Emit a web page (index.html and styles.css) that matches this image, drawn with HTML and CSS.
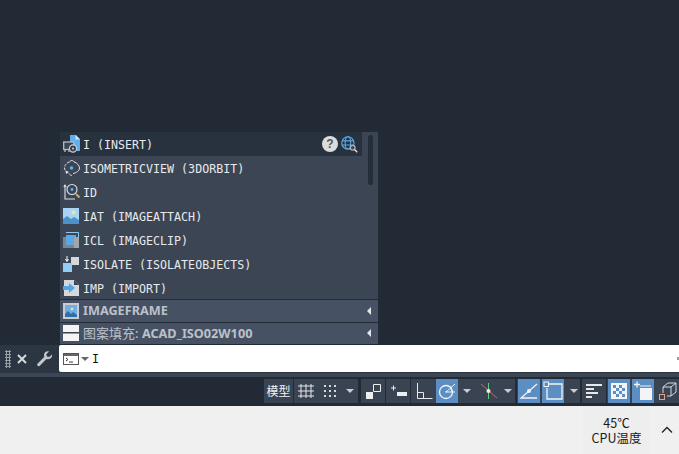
FILE: index.html
```html
<!DOCTYPE html>
<html lang="zh">
<head>
<meta charset="utf-8">
<title>AutoCAD</title>
<link rel="stylesheet" href="styles.css">
</head>
<body>
<div class="app">
  <main class="canvas">
    <div class="popup">
      <div class="upper">
        <div class="list">
          <div class="row row-active">
            <svg class="ric ric-lg" viewBox="0 0 18 18"><path d="M7 0h6l4 4v12H7z" fill="#5fb0ee"/><path d="M12.500 0L17 4.500h-4.500z" fill="#cfe6f8"/><rect x=".7" y="7" width="10" height="7.500" fill="#3a4453" stroke="#b8bcc2" stroke-width="1.300"/><circle cx="10" cy="13.500" r="3.600" fill="#39424f" stroke="#c8ccd1" stroke-width="1.200"/><path d="M2 14.500v2.500M6 14.500v2.500" stroke="#b8bcc2" stroke-width="1.300"/><circle cx="10" cy="13.500" r="1" fill="#d2d5d9"/></svg>
            <span class="cmd">I (INSERT)</span>
            <span class="row-tools">
              <span class="help">?</span>
              <svg class="globe" viewBox="0 0 16 16"><circle cx="6.500" cy="6.500" r="5.800" fill="none" stroke="#5aa9e6" stroke-width="1.100"/><ellipse cx="6.500" cy="6.500" rx="2.600" ry="5.800" fill="none" stroke="#5aa9e6"/><path d="M.8 4.600h11.400M.8 8.400h11.400" stroke="#5aa9e6"/><circle cx="11" cy="11" r="2.200" fill="#39424f" stroke="#aeb2b8" stroke-width="1.200"/><path d="M12.700 12.700l2.600 2.600" stroke="#e8e8e8" stroke-width="1.200"/></svg>
            </span>
          </div>
          <div class="row">
            <svg class="ric ric-lg" viewBox="0 0 18 18"><g fill="none" stroke="#dfe2e5"><path d="M6 3C3.500 4 1.500 6.500 1.500 9c0 2 1.500 3.500 3.500 4.500" stroke-dasharray="2.500 1.200"/><path d="M11.500 3c2.500 1 5 3.500 5 6 0 3-3.500 5-6.500 5.500"/><path d="M6 3.500C6.800 2 8 1.500 9 1.500c1 0 2 .8 2.800 2.200M6 14.500c.8 1.300 2 2 3 2"/></g><path d="M2.500 11.500l3.500 1.500-3 2z" fill="#dfe2e5"/><circle cx="8.500" cy="9" r="1.800" fill="#5fb0ee"/></svg>
            <span class="cmd">ISOMETRICVIEW (3DORBIT)</span>
          </div>
          <div class="row">
            <svg class="ric ric-lg" viewBox="0 0 18 18"><g fill="none" stroke="#dfe2e5" stroke-width="1.100"><path d="M2 3v13h10"/><circle cx="9" cy="6.500" r="5"/></g><path d="M.3 4L2 1l1.700 3z" fill="#dfe2e5"/><circle cx="9" cy="6.500" r="1.400" fill="#5fb0ee"/><path d="M13 11l3.500 3.500" stroke="#d9a860" stroke-width="2"/></svg>
            <span class="cmd">ID</span>
          </div>
          <div class="row">
            <svg class="ric" viewBox="0 0 16 16"><rect width="16" height="16" fill="#a8d5f5"/><path d="M0 16v-5l4-3 4 3 3-2 5 3v4z" fill="#4c91c8"/><circle cx="10.500" cy="4.500" r="2" fill="#f3e39b"/></svg>
            <span class="cmd">IAT (IMAGEATTACH)</span>
          </div>
          <div class="row">
            <svg class="ric" viewBox="0 0 16 16"><rect x="0" y="5" width="11" height="11" fill="#7f858d"/><rect x="3" y="3" width="10" height="10" fill="#5aa9e6"/><path d="M3 .5h12.500V13" fill="none" stroke="#8fc8f2"/><rect x="11" y="5" width="5" height="11" fill="#a2a6ab"/></svg>
            <span class="cmd">ICL (IMAGECLIP)</span>
          </div>
          <div class="row">
            <svg class="ric" viewBox="0 0 16 16"><rect x="8" y="1" width="8" height="8" fill="#d5d7da"/><rect x="0" y="7" width="9" height="9" fill="#93cdf6"/><path d="M4 0v5M2.500 3L4 5.500 5.500 3" fill="none" stroke="#fff"/></svg>
            <span class="cmd">ISOLATE (ISOLATEOBJECTS)</span>
          </div>
          <div class="row">
            <svg class="ric" viewBox="0 0 16 16"><path d="M1 0h10l5 5v11H1z" fill="#d5d7da"/><path d="M11 0l5 5h-5z" fill="#39424f"/><path d="M0 6h6V3l6 5-6 5v-3H0z" fill="#4fa6e8"/></svg>
            <span class="cmd">IMP (IMPORT)</span>
          </div>
        </div>
        <div class="scroll"><span class="thumb"></span></div>
      </div>
      <div class="row row-sys">
        <svg class="ric" viewBox="0 0 16 16"><rect width="16" height="16" fill="#c9ccd0"/><rect x="2" y="2" width="12" height="12" fill="#6fb0e4"/><path d="M2 14v-3l3-3 3 3 2-2 4 3v2z" fill="#2e6fa6"/><circle cx="9" cy="6" r="1.300" fill="#f3e39b"/></svg>
        <span class="sys">IMAGEFRAME</span>
        <span class="caret-left"></span>
      </div>
      <div class="row row-sys">
        <svg class="ric" viewBox="0 0 16 16"><rect width="16" height="16" fill="#f4f4f4"/><rect y="7" width="16" height="1.500" fill="#39424f"/></svg>
        <span class="sys"><span class="sys-cjk">图案填充:</span> ACAD_ISO02W100</span>
        <span class="caret-left"></span>
      </div>
    </div>
  </main>

  <section class="cmdbar">
    <span class="grip"></span>
    <svg class="cb-ic" viewBox="0 0 12 12"><path d="M2 2l8 8M10 2l-8 8" stroke="#d6d9dd" stroke-width="2"/></svg>
    <svg class="cb-wrench" viewBox="0 0 16 16"><path d="M15 3.500l-2.800 2.600-2.300-.6-.6-2.300L12 .5C9.500-.2 7 1.500 7 4c0 .7.100 1.200.4 1.700L.8 12.600c-.8.800-.8 1.500-.2 2.200.700.700 1.500.600 2.200-.1l6.600-6.800c2.900 1 6.400-1.300 5.600-4.400z" fill="#c4c7cb"/></svg>
    <div class="cmdinput">
      <svg class="prompt" viewBox="0 0 16 12"><rect x=".5" y=".5" width="15" height="11" fill="#fff" stroke="#555"/><rect x="1" y="1" width="14" height="2" fill="#666"/><path d="M3 5l2 1.500L3 8M6 9h4" fill="none" stroke="#333"/></svg>
      <span class="prompt-caret"></span>
      <span class="typed">I</span>
      <span class="input-end"></span>
    </div>
  </section>
  <div class="band"></div>

  <footer class="statusbar">
    <div class="sgroup g-model"><span class="model">模型</span></div>
    <div class="sgroup g-grid">
      <svg class="sb" viewBox="0 0 20 20"><path d="M5 3v14M10 3v14M15 3v14M2 5h16M2 10h16M2 15h16" stroke="#e6e8ea" fill="none"/></svg>
      <svg class="sb" viewBox="0 0 20 20"><g fill="#d6d9dc"><rect x="4" y="4" width="2" height="2"/><rect x="9" y="4" width="2" height="2"/><rect x="14" y="4" width="2" height="2"/><rect x="4" y="9" width="2" height="2"/><rect x="9" y="9" width="2" height="2"/><rect x="14" y="9" width="2" height="2"/><rect x="4" y="14" width="2" height="2"/><rect x="9" y="14" width="2" height="2"/><rect x="14" y="14" width="2" height="2"/></g></svg>
      <span class="drop"></span>
    </div>
    <div class="sgroup g-one">
      <svg class="sb" viewBox="0 0 20 20"><rect x="3" y="11" width="7" height="7" fill="#eceef0"/><path d="M10.500 10.500V3.500h7v7h-7" fill="none" stroke="#eceef0"/></svg>
    </div>
    <div class="sgroup g-one">
      <svg class="sb" viewBox="0 0 20 20"><path d="M3 7h5M5.500 4.500v5" stroke="#eceef0" fill="none"/><rect x="9" y="11" width="10" height="4" fill="#eceef0"/></svg>
    </div>
    <div class="sgroup g-polar">
      <svg class="sb" viewBox="0 0 20 20"><path d="M3.500 2v15.500h15M3.500 11.500h6v6" fill="none" stroke="#e6e8ea"/></svg>
      <svg class="sb on" viewBox="0 0 22 24"><circle cx="10" cy="13" r="6.500" fill="none" stroke="#f2f4f6" stroke-width="1.300"/><path d="M10 13l9-8M9 13h10M14 7l2 6" fill="none" stroke="#f2f4f6"/></svg>
      <span class="drop"></span>
      <svg class="sb" viewBox="0 0 20 20"><path d="M9.500 2v16" stroke="#5fd07f"/><path d="M2 3l16 14" stroke="#e0605a"/><circle cx="9.500" cy="10" r="2" fill="#eceef0"/></svg>
      <span class="drop"></span>
    </div>
    <div class="sgroup g-otrack">
      <svg class="sb on" viewBox="0 0 22 24"><path d="M19 5L3 19h16" fill="none" stroke="#f2f4f6" stroke-width="1.300"/><circle cx="11" cy="12" r="2" fill="#f2f4f6"/></svg>
      <svg class="sb on" viewBox="0 0 22 24"><path d="M7 5h13v15H5V9" fill="none" stroke="#f2f4f6" stroke-width="1.300"/><rect x="2" y="3" width="4.500" height="4.500" fill="none" stroke="#f2f4f6"/></svg>
      <span class="drop"></span>
    </div>
    <div class="sgroup g-one">
      <svg class="sb" viewBox="0 0 20 20"><path d="M2 4h16M2 8h8M2 12h12M2 16h6" stroke="#e6e8ea" stroke-width="2" fill="none"/></svg>
    </div>
    <div class="sgroup g-last">
      <svg class="sb on" viewBox="0 0 22 24"><rect x="3" y="4" width="16" height="16" fill="#f2f4f6"/><path d="M5 6h3v3H5zM11 6h3v3h-3zM8 9h3v3H8zM14 9h3v3h-3zM5 12h3v3H5zM11 12h3v3h-3zM8 15h3v3H8zM14 15h3v3h-3z" fill="#5b8fc3"/></svg>
      <svg class="sb on" viewBox="0 0 22 24"><rect x="8" y="9" width="12" height="12" fill="#f2f4f6"/><path d="M5 2.500v6M2 5.500h6" stroke="#f2f4f6" fill="none" stroke-width="1.300"/><path d="M8 7h11" stroke="#f2f4f6" fill="none"/></svg>
      <svg class="sb iso" viewBox="0 0 20 20"><path d="M5 12V6l5-4h8v9l-5 4H9" fill="none" stroke="#d6d9dc"/><path d="M5 6h8v9M13 6l5-4" fill="none" stroke="#d6d9dc"/><rect x="1.500" y="13.500" width="5" height="5" fill="none" stroke="#e6a27a"/></svg>
    </div>
  </footer>

  <div class="taskbar">
    <div class="tray-item">
      <span class="tray-line">45℃</span>
      <span class="tray-line">CPU温度</span>
    </div>
    <svg class="chev" viewBox="0 0 12 8"><path d="M1 6.500l5-5 5 5" fill="none" stroke="#222" stroke-width="1.300"/></svg>
  </div>
</div>
</body>
</html>
```
FILE: styles.css
```css
* { box-sizing: border-box; }
html, body { margin: 0; padding: 0; }
body { width: 679px; height: 454px; overflow: hidden; font-family: "Noto Sans", "Noto Sans CJK SC", sans-serif; }

.app { display: flex; flex-direction: column; width: 679px; height: 454px; }

.canvas { position: relative; flex: 0 0 345px; background: #212a35; }

.popup { position: absolute; left: 60px; top: 132px; width: 318px; height: 212px; display: flex; flex-direction: column; background: #3b4554; }
.upper { display: flex; flex: none; height: 167px; overflow: hidden; }
.list { flex: 1; display: flex; flex-direction: column; }
.row { display: flex; align-items: center; height: 24px; flex: none; padding-left: 3px; color: #e8eaec; }
.row-active { background: #28313e; }
.row-sys { flex: 1; height: auto; background: #475164; border-top: 1px solid #232b36; color: #bcc1c9; }
.ric { width: 16px; height: 16px; flex: none; margin-right: 4px; }
.ric-lg { width: 18px; height: 18px; margin-right: 2px; }
.cmd { font: 11.65px/1 "DejaVu Sans Mono", monospace; white-space: pre; padding-top: 4px; }
.sys { font: 700 12.7px/1 "Noto Sans", "Noto Sans CJK SC", sans-serif; white-space: pre; }
.sys-cjk { font-family: "Noto Sans CJK SC", sans-serif; font-weight: 400; font-size: 13px; }
.row-tools { margin-left: auto; display: flex; align-items: center; gap: 3px; padding-right: 4px; }
.help { width: 16px; height: 16px; border-radius: 50%; background: #dcdcdc; color: #555; font: 700 12px/16px "Liberation Sans", sans-serif; text-align: center; }
.globe { width: 17px; height: 17px; }
.caret-left { margin-left: auto; margin-right: 7px; width: 0; height: 0; border: 4px solid transparent; border-right-color: #e4e6e9; border-left-width: 0; }

.scroll { width: 16px; flex: none; display: flex; justify-content: center; align-items: flex-start; padding-top: 3px; background: #3b4554; }
.thumb { width: 5px; height: 50px; border-radius: 3px; background: #252d39; }

.cmdbar { flex: 0 0 28px; display: flex; align-items: flex-start; background: #2c3542; }
.grip { width: 6px; height: 18px; margin: 5px 0 0 5px; background-image: radial-gradient(#9aa0a7 1px, transparent 1.200px); background-size: 3px 3px; }
.cb-ic { width: 12px; height: 12px; margin: 8px 0 0 5px; }
.cb-wrench { width: 16px; height: 16px; margin: 6px 0 0 9px; }
.cmdinput { flex: 1; height: 27px; margin-left: 6px; display: flex; align-items: center; background: #fff; border-radius: 2px 0 0 2px; padding-left: 4px; }
.prompt { width: 16px; height: 12px; }
.prompt-caret { width: 0; height: 0; margin-left: 2px; border: 4px solid transparent; border-top-color: #666; border-bottom-width: 0; }
.typed { margin-left: 3px; padding-top: 3px; font: 11.65px/1 "DejaVu Sans Mono", monospace; color: #111; }
.input-end { margin-left: auto; width: 2px; height: 3px; background: #9a9a9a; }

.band { flex: 0 0 4px; background: #3b4554; }

.statusbar { flex: 0 0 29px; display: flex; align-items: flex-start; padding: 2px 0 0 264px; background: #222a35; overflow: hidden; }
.sgroup { display: flex; align-items: center; flex: none; height: 24px; background: #394352; }
.g-model { width: 29px; justify-content: center; margin-right: 1px; background: #394352; }
.g-grid { width: 64px; padding-left: 2px; gap: 4px; margin-right: 3px; }
.g-grid .drop { margin-left: 2px; }
.g-one { width: 24px; justify-content: center; margin-right: 1px; }
.g-polar { width: 104px; padding-left: 3px; gap: 2px; margin-right: 2px; }
.g-polar .drop { margin: 0 3px; }
.g-polar .drop + .sb { margin-left: 3px; }
.g-otrack { width: 63px; padding-left: 1px; gap: 2px; margin-right: 2px; }
.g-otrack .drop { margin-left: 4px; }
.g-last { width: 73px; padding-left: 1px; gap: 2px; }
.model { font: 12px/1 "Noto Sans CJK SC", sans-serif; color: #f0f2f4; }
.sb { width: 20px; height: 20px; flex: none; }
.sb.on { width: 22px; height: 24px; background: #5b8fc3; }
.sb.iso { margin-left: 2px; }
.drop { width: 0; height: 0; flex: none; border: 4px solid transparent; border-top-color: #c9ccd0; border-bottom-width: 0; }

.taskbar { flex: 1; display: flex; align-items: center; justify-content: flex-end; background: #f0f0f0; padding-right: 6px; gap: 11px; }
.tray-item { display: flex; flex-direction: column; align-items: center; height: 48px; justify-content: center; gap: 1px; width: 67px; background: #eeeeee; color: #1a1a1a; }
.tray-line { font: 12.5px/14px "Noto Sans CJK SC", sans-serif; height: 14px; }
.chev { width: 12px; height: 8px; }
```
